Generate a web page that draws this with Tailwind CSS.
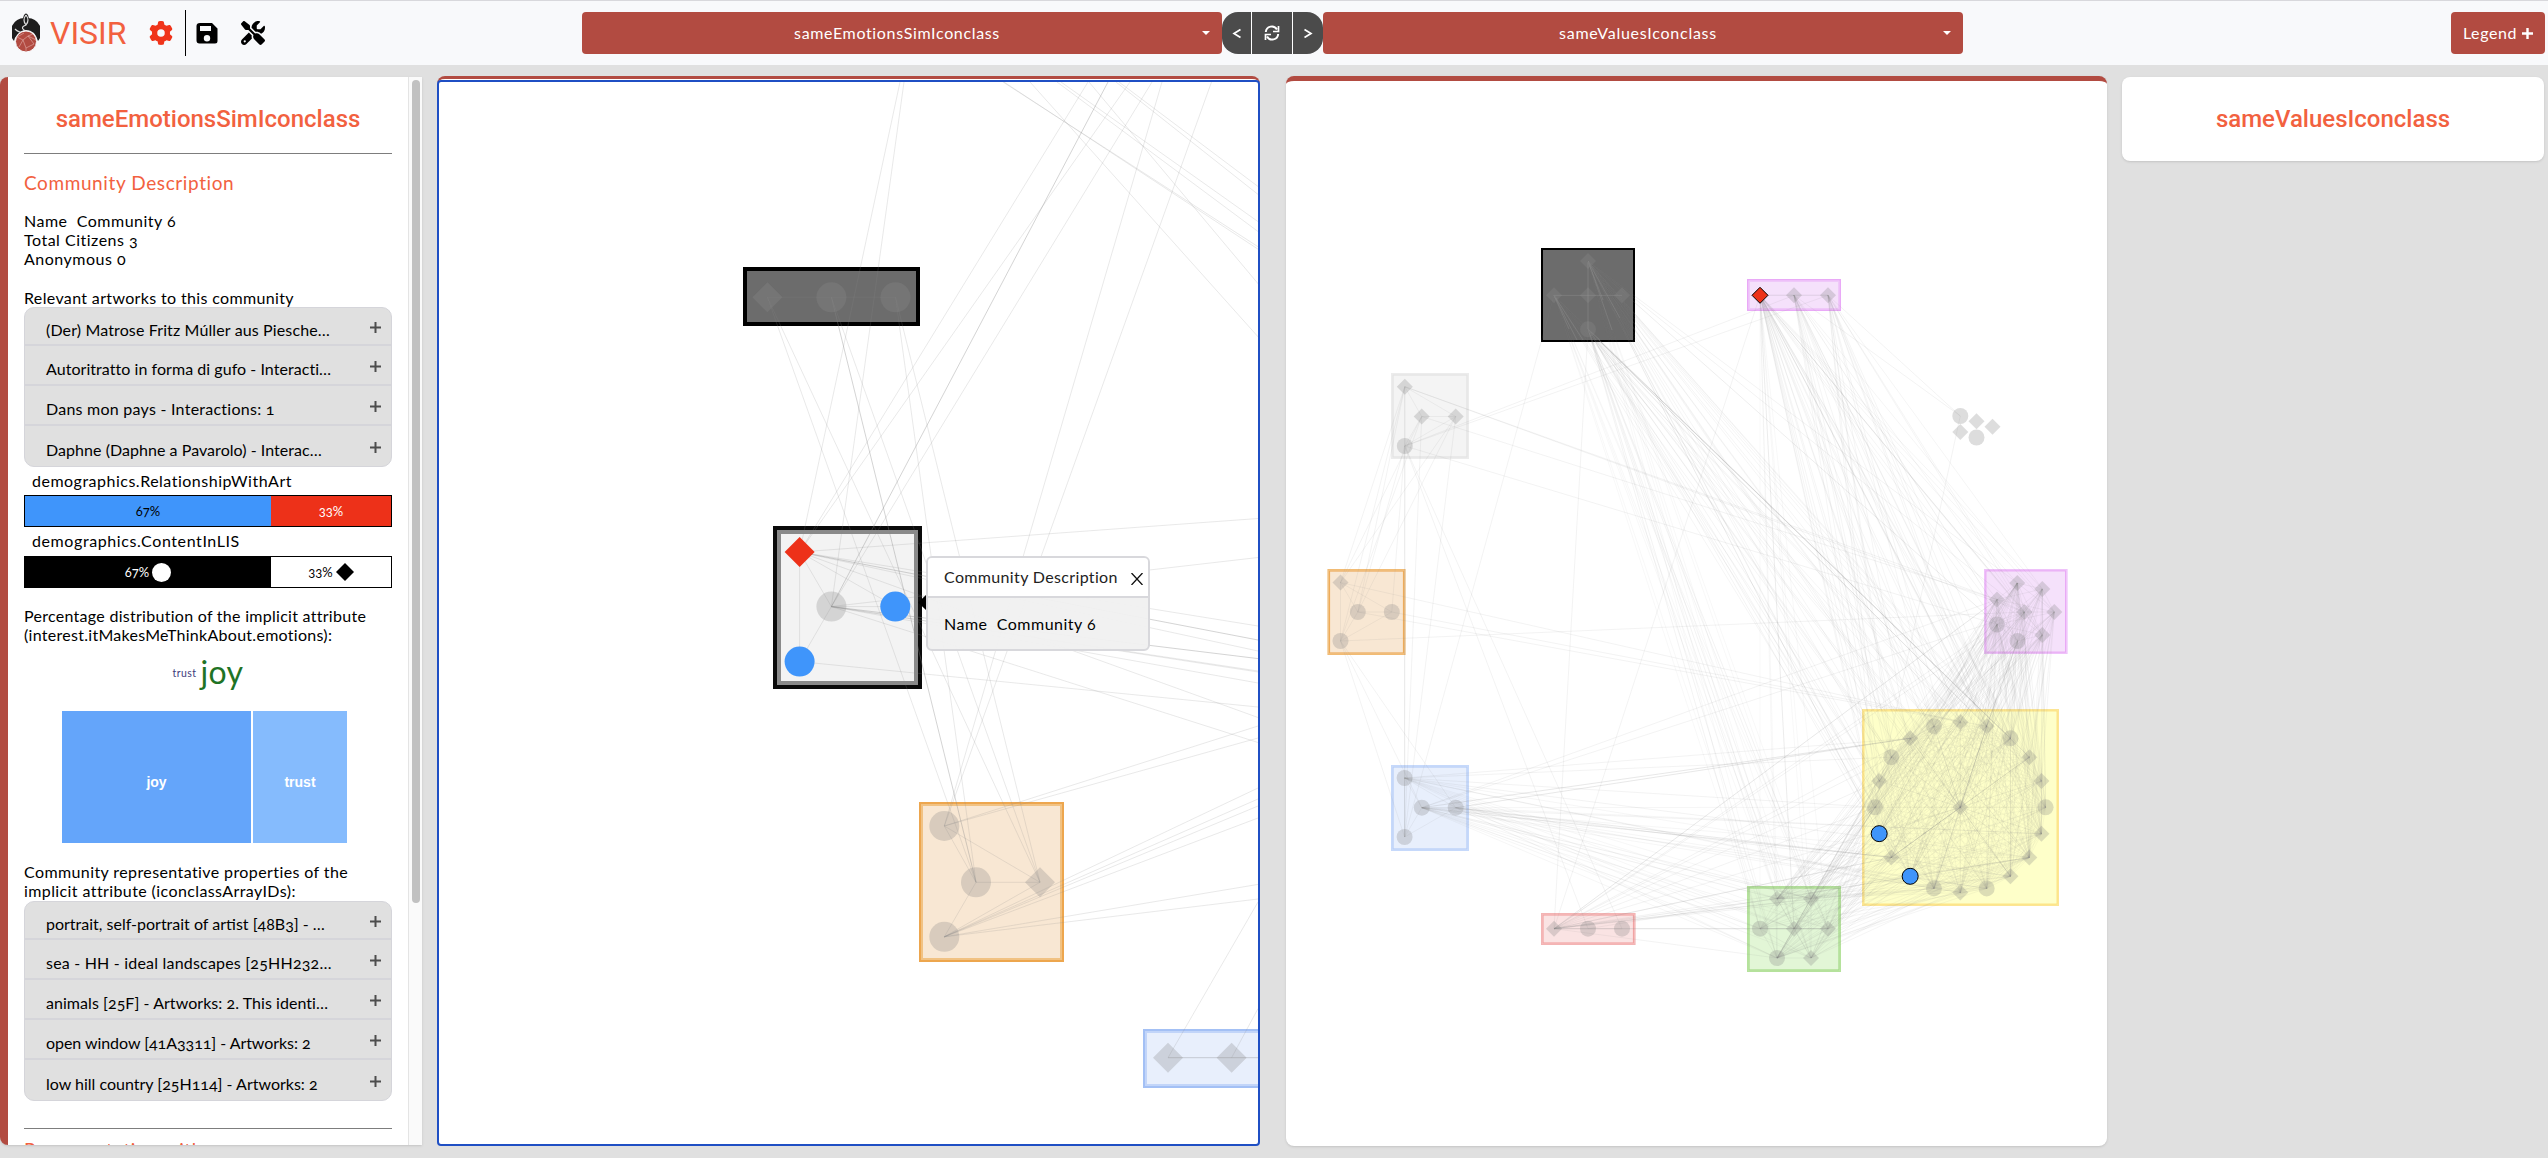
<!DOCTYPE html>
<html lang="en">
<head>
<meta charset="utf-8">
<title>VISIR</title>
<script src="https://cdn.jsdelivr.net/npm/@tailwindcss/browser@4"></script>
</head>
<body class="h-[1158px] w-[2548px] overflow-hidden bg-[#e0e0e0] font-['Lato',sans-serif] text-base text-black [font-feature-settings:'onum']">
<header class="flex h-[65px] items-center border-t border-[#d8d8dc] bg-[#f8f9fb] pl-3">
  <svg class="h-10 w-7" viewBox="0 0 28 40"><path d="M14 5A14 14 0 0 0 2 28Q3 24 5 22Q9 17 14 17Q23 17 26 28A14 14 0 0 0 14 5Z" fill="#1d1d1d"/><ellipse cx="14" cy="7" rx="3" ry="6.500" fill="#1d1d1d"/><path d="M14 2Q10 7 14 12Q18 7 14 2M14 12Q8 14 12 17Q20 20 24 28M3 16Q9 22 17 18" fill="none" stroke="#ddd" stroke-width="1.200"/><circle cx="14" cy="28.500" r="10.500" fill="#b24b41" stroke="#f8f9fb"/><path d="M5 24L11 27L14 35L22 31L16 23L21 21M11 27L7 34M14 35L14 39M5 24L12 20M16 23L24 27M11 27L16 23" fill="none" stroke="#dca29c" stroke-width=".7"/></svg>
  <span class="ml-[10px] w-[77px] whitespace-nowrap font-['Roboto'] text-[32px] leading-none text-[#f2613f]">VISIR</span>
  <svg class="ml-[22px] size-6" viewBox="0 0 512 512" fill="#f0341a"><path d="M495.900 166.600c3.200 8.700 .5 18.400-6.400 24.600l-43.300 39.400c1.100 8.300 1.700 16.800 1.700 25.400s-.6 17.100-1.700 25.400l43.300 39.400c6.900 6.200 9.600 15.900 6.400 24.600c-4.400 11.900-9.700 23.300-15.800 34.300l-4.700 8.100c-6.600 11-14 21.400-22.100 31.200c-5.900 7.200-15.700 9.600-24.500 6.800l-55.700-17.700c-13.400 10.300-28.200 18.900-44 25.400l-12.500 57.100c-2 9.100-9 16.300-18.200 17.800c-13.800 2.300-28 3.500-42.500 3.500s-28.700-1.200-42.500-3.500c-9.200-1.500-16.200-8.700-18.200-17.800l-12.500-57.100c-15.800-6.500-30.600-15.100-44-25.400L83.100 425.900c-8.800 2.800-18.600 .3-24.500-6.800c-8.100-9.800-15.500-20.200-22.100-31.200l-4.700-8.100c-6.100-11-11.400-22.400-15.800-34.300c-3.200-8.700-.5-18.400 6.400-24.600l43.300-39.400C64.600 273.100 64 264.600 64 256s.6-17.100 1.700-25.400L22.400 191.200c-6.900-6.200-9.600-15.900-6.400-24.600c4.400-11.900 9.700-23.300 15.800-34.300l4.700-8.100c6.600-11 14-21.400 22.100-31.200c5.900-7.200 15.700-9.600 24.500-6.800l55.700 17.700c13.400-10.300 28.200-18.900 44-25.400l12.500-57.100c2-9.100 9-16.300 18.200-17.800C227.300 1.200 241.500 0 256 0s28.700 1.200 42.500 3.500c9.200 1.500 16.200 8.700 18.200 17.800l12.500 57.100c15.800 6.500 30.600 15.100 44 25.400l55.700-17.700c8.800-2.800 18.600-.3 24.500 6.800c8.100 9.800 15.500 20.200 22.100 31.200l4.700 8.100c6.100 11 11.400 22.400 15.800 34.300zM256 336a80 80 0 1 0 0-160 80 80 0 1 0 0 160z"/></svg>
  <span class="ml-3 h-[46px] w-px bg-black"></span>
  <svg class="ml-[9px] size-6" viewBox="0 0 24 24"><path fill-rule="evenodd" d="M5 2H17L22.500 7.500V20Q22.500 22.500 20 22.500H4.500Q1.500 22.500 1.500 19.500V5Q1.500 2 5 2ZM5 5V10H16V5ZM12 14A3.200 3.200 0 1 0 12 20.400A3.200 3.200 0 1 0 12 14Z"/></svg>
  <svg class="ml-[22px] size-6" viewBox="0 0 512 512"><path d="M78.600 5C69.100-2.400 55.600-1.500 47 7L7 47c-8.500 8.500-9.400 22-2.100 31.600l80 104c4.500 5.900 11.600 9.400 19 9.400h54.100l109 109c-14.700 29-10 65.400 14.300 89.600l112 112c12.500 12.500 32.800 12.500 45.300 0l64-64c12.500-12.500 12.500-32.800 0-45.300l-112-112c-24.200-24.200-60.600-29-89.600-14.300l-109-109V104c0-7.500-3.500-14.500-9.400-19L78.600 5zM19.900 396.100C7.200 408.800 0 426.100 0 444.100C0 481.600 30.400 512 67.900 512c18 0 35.300-7.200 48-19.900L233.700 374.300c-7.800-20.900-9-43.600-3.600-65.100l-61.700-61.700L19.900 396.100zM512 144c0-10.500-1.100-20.700-3.200-30.500c-2.400-11.200-16.100-14.100-24.200-6l-63.900 63.900c-3 3-7.100 4.700-11.300 4.700H352c-8.800 0-16-7.200-16-16V102.600c0-4.200 1.700-8.300 4.700-11.300l63.900-63.900c8.100-8.100 5.200-21.800-6-24.200C388.700 1.100 378.500 0 368 0C288.500 0 224 64.500 224 144l0 .8 85.300 85.300c36-9.100 75.800 .5 104 28.700L429 274.500c49-23 83-72.800 83-130.500zM56 432a24 24 0 1 1 48 0 24 24 0 1 1 -48 0z"/></svg>

  <div class="ml-[317px] flex h-[42px] text-white">
    <div class="flex w-[640px] items-center rounded bg-[#b24b41] pr-3"><span class="grow pl-[10px] text-center tracking-[.65px]">sameEmotionsSimIconclass</span><svg class="h-1 w-2" viewBox="0 0 8 4"><path d="M0 0H8L4 4Z" fill="#fff"/></svg></div>
    <div class="flex w-[101px] items-center divide-x divide-white overflow-hidden rounded-[16px] bg-[#4b4b4b] text-center">
      <span class="flex h-full w-[30px] items-center justify-center"><svg class="size-3" viewBox="0 0 12 12" fill="none" stroke="#fff" stroke-width="1.700"><path d="M9.500 2.500L3 6.500L9.500 10.500"/></svg></span>
      <span class="flex h-full w-[41px] items-center justify-center"><svg class="size-4" viewBox="0 0 16 16" fill="none" stroke="#fff" stroke-width="2"><path d="M1.800 7A6 6 0 0 1 13 4.500M14.200 9A6 6 0 0 1 3 11.500"/><path d="M14.500 1V6.500H9M1.500 15V9.500H7" stroke-width="1.700"/></svg></span>
      <span class="flex h-full w-[30px] items-center justify-center"><svg class="size-3" viewBox="0 0 12 12" fill="none" stroke="#fff" stroke-width="1.700"><path d="M2.500 2.500L9 6.500L2.500 10.500"/></svg></span>
    </div>
    <div class="flex w-[640px] items-center rounded bg-[#b24b41] pr-3"><span class="grow pl-[10px] text-center tracking-[.75px]">sameValuesIconclass</span><svg class="h-1 w-2" viewBox="0 0 8 4"><path d="M0 0H8L4 4Z" fill="#fff"/></svg></div>
  </div>
  <div class="ml-auto mr-[3px] flex h-[42px] w-[94px] items-center justify-center gap-[5px] rounded bg-[#b24b41] text-white"><span class="tracking-[.6px]">Legend</span><svg class="size-[11px]" viewBox="0 0 11 11" stroke="#fff" stroke-width="2.400"><path d="M5.500 0V11M0 5.500H11"/></svg></div>
</header>

<main class="flex items-start pt-[11px]">
  <aside class="mt-px flex h-[1068px] w-[422px] shrink-0 overflow-hidden rounded-l-lg border-l-8 border-[#b24b41] bg-white shadow">
    <div class="w-[400px] shrink-0 overflow-hidden px-4 leading-[19px] tracking-[.35px]">
      <h1 class="mt-[26px] whitespace-nowrap text-center font-['Roboto'] text-[24px] font-medium leading-8 tracking-normal text-[#f2613f]">sameEmotionsSimIconclass</h1>
      <hr class="mt-[18px] border-[#7d7d7d]">
      <h2 class="mt-[17px] text-[19px] leading-6 tracking-[.6px] text-[#f2613f]">Community Description</h2>
      <p class="mt-[16px] whitespace-pre tracking-[.5px]">Name  Community 6
Total Citizens 3
Anonymous 0</p>
      <p class="mt-[20px]">Relevant artworks to this community</p>
      <div id="art" class="divide-y-2 divide-[#d5d5da] overflow-hidden rounded-[10px] border border-[#d5d5da] bg-[#e0e0e0]"></div>
      <p class="mt-[4px] pl-2 tracking-[.5px]">demographics.RelationshipWithArt</p>
      <div class="mt-[5px] flex h-8 border border-black text-center text-[13px] leading-[31px] tracking-normal"><span class="w-[246px] bg-[#3f95fb]">67%</span><span class="grow bg-[#ed3119] text-white">33%</span></div>
      <p class="mt-[4px] pl-2 tracking-[.6px]">demographics.ContentInLIS</p>
      <div class="mt-[6px] flex h-8 border border-black text-[13px] leading-[30px] tracking-normal"><span class="flex w-[246px] items-center justify-center gap-[3px] bg-black text-white">67%<i class="size-[19px] rounded-full bg-white"></i></span><span class="flex grow items-center justify-center gap-[3px]">33%<svg class="size-[18px]" viewBox="0 0 18 18"><path d="M9 0L18 9L9 18L0 9Z"/></svg></span></div>
      <p class="mt-[18px] whitespace-nowrap tracking-[.28px]">Percentage distribution of the implicit attribute<br>(interest.itMakesMeThinkAbout.emotions):</p>
      <div class="mt-[8px] flex h-[42px] items-center justify-center gap-1"><span class="text-[10.5px] tracking-[.4px] text-[#3d3b7c]">trust</span><span class="-mt-[3px] text-[32px] tracking-[.4px] text-[#1f7325]">joy</span></div>
      <div class="ml-[38px] mt-[17px] flex h-[132px] w-[285px] gap-[2px] text-center font-['Liberation_Sans'] text-sm font-bold leading-[142px] tracking-normal text-white"><span class="w-[189px] bg-[#64a5fa]">joy</span><span class="grow bg-[#85bbfd]">trust</span></div>
      <p class="mt-[19px] whitespace-nowrap tracking-[.4px]">Community representative properties of the<br>implicit attribute (iconclassArrayIDs):</p>
      <div id="icon" class="mt-px divide-y-2 divide-[#d5d5da] overflow-hidden rounded-[10px] border border-[#d5d5da] bg-[#e0e0e0]"></div>
      <hr class="mt-[27px] border-[#7d7d7d]">
      <h2 class="mt-[9px] whitespace-nowrap text-[19px] leading-6 tracking-[.6px] text-[#f2613f]">Representation with</h2>
    </div>
    <div class="w-[14px] border-l border-[#e4e4e4] bg-[#fafafa] pl-[3px] pt-[3px]"><div class="h-[823px] w-2 rounded-full bg-[#c1c1c1]"></div></div>
  </aside>

  <section class="relative ml-[15px] h-[1070px] w-[823px] shrink-0 rounded-lg border-t-[3px] border-[#b24b41] bg-white">
    <div class="mt-px h-[1066px] overflow-hidden rounded border-2 border-[#1f4fc4]"><svg id="net1" class="block h-full w-full" viewBox="439 82 819 1062"></svg></div>
    <div class="absolute left-[481px] top-[516px] h-[15px] w-2 bg-black [clip-path:polygon(100%_0,100%_100%,0_50%)]"></div>
    <div class="absolute left-[489px] top-[477px] h-[95px] w-[224px] overflow-hidden rounded-md border-2 border-[#d8d8dc] bg-[#f0f0f0]/95 tracking-[.35px]">
      <div class="flex h-[40px] items-center border-b-2 border-[#d8d8dc] bg-white/95 pl-4 text-[#222]"><span class="w-[187px] whitespace-nowrap">Community Description</span><svg class="mt-1 size-3" viewBox="0 0 12 12" stroke="#111" stroke-width="1.300"><path d="M.5 0L11.500 12M11.500 0L.5 12"/></svg></div>
      <div class="whitespace-pre pl-4 leading-[52px] tracking-[.5px]">Name  Community 6</div>
    </div>
  </section>

  <section class="ml-[26px] h-[1070px] w-[821px] shrink-0 overflow-hidden rounded-lg border-t-[5px] border-[#b24b41] bg-white shadow"><svg id="net2" class="block h-[1065px] w-[821px]" viewBox="1286 81 821 1065"></svg></section>

  <aside class="ml-[15px] mt-px flex h-[84px] w-[422px] shrink-0 items-center justify-center rounded-lg bg-white font-['Roboto'] text-[24px] font-medium text-[#f2613f] shadow">sameValuesIconclass</aside>
</main>

<script>
// Accordion rows of the side panel
function rows(id, spacing, items) {
  document.getElementById(id).innerHTML = items.map((t, i) =>
    '<div class="flex ' + (i ? 'h-10' : 'h-[38px]') + ' items-center justify-between pl-[21px] pr-[10px] pt-[6px]"><span class="whitespace-nowrap" style="letter-spacing:' + spacing[i] + 'px">' + t +
    '</span><svg class="mb-[3px] size-[11px] shrink-0" viewBox="0 0 11 11" stroke="#4d4d4d" stroke-width="2"><path d="M5.500 0V11M0 5.500H11"/></svg></div>').join('');
}
rows('art', [.13, .05, .25, .05], ['(Der) Matrose Fritz Múller aus Piesche…', 'Autoritratto in forma di gufo - Interacti…', 'Dans mon pays - Interactions: 1', 'Daphne (Daphne a Pavarolo) - Interac…']);
rows('icon', [0, .2, .05, -.05, 0], ['portrait, self-portrait of artist [48B3] - …', 'sea - HH - ideal landscapes [25HH232…', 'animals [25F] - Artworks: 2. This identi…', 'open window [41A3311] - Artworks: 2', 'low hill country [25H114] - Artworks: 2']);

const box = (x, y, r, b, fill, c, w, inner) =>
  `<rect x="${x}" y="${y}" width="${r - x}" height="${b - y}" fill="${fill}"/>` +
  (inner ? `<rect x="${x + w * 1.5}" y="${y + w * 1.5}" width="${r - x - w * 3}" height="${b - y - w * 3}" fill="none" stroke="${inner}" stroke-width="${w}"/>` : '') +
  `<rect x="${x + w / 2}" y="${y + w / 2}" width="${r - x - w}" height="${b - y - w}" fill="none" stroke="${c}" stroke-width="${w}"/>`;
const node = (k, x, y, s, fill = 'rgba(128,128,128,.27)', st = 'none') => k == 'c'
  ? `<circle cx="${x}" cy="${y}" r="${s}" fill="${fill}" stroke="${st}"/>`
  : `<path d="M${x} ${y - s}L${x + s} ${y}L${x} ${y + s}L${x - s} ${y}Z" fill="${fill}" stroke="${st}"/>`;
const line = (a, b, o) => `<path d="M${a[0]} ${a[1]}L${b[0]} ${b[1]}" stroke="rgba(136,136,136,${o})"/>`;

// Left network
{
  const R = [799.6, 552], G = [831.4, 606.6], B = [895.3, 606.6], C = [799.6, 661.6];
  const o1 = [944.3, 826], o2 = [976, 882.3], o3 = [1040, 882.3], o4 = [944.3, 936.8];
  const k1 = [767.4, 297.3], k2 = [831.4, 297.3], k3 = [895.5, 297.3], p1 = [1168, 1057.7], p2 = [1231.6, 1057.7];
  let s = box(743, 267, 920, 326, '#6c6c6c', '#000', 4) + box(773, 526, 922, 689, '#f3f3f3', '#0a0a0a', 4, '#8a8a8a')
    + box(919, 802, 1064, 962, '#f8e7d3', '#eda64e', 2, '#f1c283') + box(1143, 1029, 1300, 1088, '#e8effc', '#a3c0f5', 2, '#c2d5f9');
  s += [['d', k1], ['c', k2], ['c', k3]].map(n => node(n[0], ...n[1], 15, '#757575')).join('') + node('c', ...G, 15)
    + node('c', ...o1, 15) + node('c', ...o2, 15) + node('d', ...o3, 15) + node('c', ...o4, 15) + node('d', ...p1, 15) + node('d', ...p2, 15);
  const E = [[[900, 82], R], [[904, 82], G], [[1088, 82], R], [[1108, 82], G, 2], [[1130, 82], R], [[1152, 82], G], [[1162, 82], o1], [[1211.5, 82], o1],
    [[1003, 82], [1260, 248]], [[1004, 82], [1260, 250.5]], [[1030, 82], [1260, 339]], [[1057, 82], [1260, 233]], [[1061, 82], [1260, 223]], [[1089, 82], [1260, 286]], [[1116, 82], [1260, 196]], [[1119, 82], [1260, 188]],
    [k1, k2], [k2, k3], [k1, o2], [k1, o3], [k2, o2, 2], [k2, o3], [k3, o2], [k3, o3],
    [R, C], [R, G], [G, C], [G, B], [R, B], [R, [1258, 518.5]], [G, [1258, 557.5]], [R, [1258, 626]], [R, [1258, 640], 2], [R, [1258, 651]], [R, [1258, 717.5]],
    [G, [1258, 658.6], 2], [G, [1258, 671]], [G, [1258, 672]], [G, [1258, 683]], [G, [1258, 742.5]], [C, [1258, 707]],
    [o1, [1258, 726]], [o1, [1258, 738]], [o4, [1258, 788]], [o4, [1258, 799]], [o4, [1258, 806]], [o4, [1258, 818]], [o4, [1258, 884.4]], [o4, [1258, 899]],
    [o1, o2], [o1, o3], [o2, o3], [o2, o4], [o3, o4], [p1, [1258, 902]], [p2, [1258, 1008.6]], [p1, [1260, 1057.7], 2]];
  s += E.map(e => line(e[0], e[1], e[2] ? .36 : .19)).join('');
  s += node('d', ...R, 15, '#ed3119') + node('c', ...B, 15, '#3f95fb') + node('c', ...C, 15, '#3f95fb');
  document.getElementById('net1').innerHTML = s;
}

// Right network
{
  const K = [['d', 1588, 261], ['d', 1554, 295.3], ['d', 1588, 295.3], ['d', 1622, 295.3], ['c', 1588, 329.3]];
  const P = [['R', 1760, 295.3], ['d', 1794, 295.3], ['d', 1828, 295.3]];
  const G = [['d', 1404.8, 386.7], ['d', 1421.7, 416.5], ['d', 1455.7, 416.5], ['c', 1404.8, 446]];
  const O = [['d', 1340.5, 582.5], ['c', 1357.8, 612], ['c', 1391.8, 612], ['c', 1340.5, 641]];
  const B = [['c', 1404.6, 778], ['c', 1421.8, 807.7], ['c', 1455.7, 807.7], ['c', 1404.6, 837]];
  const D = [['d', 1554, 928.7], ['c', 1588, 928.7], ['c', 1622, 928.7]];
  const N = [['d', 1777, 898.7], ['d', 1811, 898.7], ['c', 1760, 928.7], ['d', 1794, 928.7], ['d', 1828, 928.7], ['c', 1777, 958], ['d', 1811, 958]];
  const V = [['d', 2017.3, 583], ['d', 2042.3, 589], ['d', 1997, 599.5], ['d', 2024.3, 612], ['d', 2054.3, 612], ['c', 1997, 624.5], ['d', 2042.3, 635], ['c', 2017.5, 641]];
  const I = [['c', 1960.3, 416], ['d', 1976.5, 421.3], ['d', 1992.5, 426.8], ['d', 1960.3, 432], ['c', 1976.5, 437.5]];
  const Y = [...'cddcddcdcdcBdBcdcddd'].map((k, i) => [k, 1960.3 + 85.3 * Math.cos(i * Math.PI / 10), 807.3 - 85.3 * Math.sin(i * Math.PI / 10)]);
  Y.push(['d', 1960.3, 807.3]);
  let s = box(1541, 248, 1635, 342, '#6c6c6c', '#000', 2) + box(1747, 279, 1841, 311, '#f5e1fb', '#e9a9f7', 1.5, '#efc8f9') + box(1391, 373, 1469, 459, '#f4f4f4', '#ececec', 1.3, '#e2e2e2')
    + box(1327.5, 569, 1405.5, 655, '#f8e7d3', '#f1bb74', 1.3, '#edab5a') + box(1391, 765, 1469, 851, '#e8effc', '#c6d9fb', 1.3, '#b4ccf7') + box(1541, 913, 1635.5, 945, '#fae3e3', '#f3b4b4', 1.3, '#f2a3a3')
    + box(1747, 886, 1841, 972, '#e2f6d6', '#b5e29c', 1.3, '#a3da85') + box(1862, 709, 2059, 906, '#feffc9', '#fce594', 1.2, '#fddf78') + box(1984, 569, 2067.5, 654, '#f5e1fb', '#efc2fa', 1.2, '#e8a4f6');
  const hot = [];
  for (const n of [K, P, G, O, B, D, N, V, I, Y].flat()) {
    if (n[0] == 'R') hot.push(node('d', n[1], n[2], 8, '#ed3119', '#000'));
    else if (n[0] == 'B') hot.push(node('c', n[1], n[2], 8, '#3f95fb', '#000'));
    else s += node(n[0], n[1], n[2], 8, K.includes(n) ? '#757575' : undefined);
  }
  const L = (a, b, o = .1) => { s += line(a.slice(1), b.slice(1), o > .1 ? o * .65 : o); };
  // Edges that leave the dark box read lighter than its fill
  const glow = (a, b) => { s += `<path d="M${a[1]} ${a[2]}L${b[0]} ${b[1]}" stroke="rgba(160,160,160,.3)"/>`; };
  const all = (g, o) => g.forEach((a, i) => g.slice(i + 1).forEach(b => L(a, b, o)));
  const pick = (g, h, m, k) => g.forEach((a, i) => h.forEach((b, j) => { if ((i * 7 + j * 5 + i * j) % m < k) L(a, b, .085); }));
  [G, O, B, N, V, P].forEach(g => all(g)); all(Y, .065);
  L(K[1], K[2]); L(K[2], K[3]); L(K[0], K[2]); L(K[2], K[4]); L(D[0], D[1]); L(D[1], D[2]);
  glow(K[1], [1622, 295.3]); glow(K[0], [1588, 329]);
  [[1569, 329], [1577, 340], [1583, 340]].forEach(p => glow(K[1], p));
  [[1603, 300], [1612, 330], [1620, 318]].forEach(p => glow(K[0], p));
  [[1592, 340], [1596, 340], [1600, 340]].forEach(p => glow(K[4], p));
  pick(V, Y, 5, 3); pick(N, Y, 5, 2); pick(V, N, 3, 1); pick(P, Y, 5, 3); pick([K[0], K[1]], Y, 5, 2); Y.forEach((y, i) => { if (i % 4 != 3) L(K[4], y, .09); });
  N.forEach(n => { L(K[4], n); L(K[0], n, .06); L(K[1], n, .06); L(P[0], n, .06); });
  pick(P, V, 5, 2); [0, 3].forEach(i => L(K[0], V[i]));
  L(K[4], Y[3], .32); L(K[4], Y[2], .15); L(K[0], V[5], .22); L(P[0], V[3], .15); L(P[1], V[7], .2); L(P[0], Y[4], .15);
  L(G[0], O[0]); L(G[0], O[3]); L(G[0], O[1]); L(G[1], O[0]); L(G[1], O[3]); L(G[2], O[1]); L(G[2], O[0]); L(G[3], O[2]); L(G[3], O[1]);
  L(G[3], B[3]); L(G[0], B[3]); L(G[1], B[3]); L(G[2], B[3]); L(K[1], B[3]); L(G[3], D[1]); L(G[3], D[2]);
  L(G[3], P[1]); L(G[3], P[2]); L(G[0], V[2]); L(G[1], V[2]); L(G[0], V[3]); L(G[3], V[5]);
  L(K[4], D[0]); L(P[0], D[0]); L(P[0], N[3]); L(P[1], I[0]); L(P[2], I[0]); L(I[0], Y[10]);
  L(O[0], Y[5]); L(O[1], Y[5]); L(O[2], Y[4]); L(O[3], V[3]); L(O[3], B[3]); L(O[3], B[1]); L(O[3], B[2]);
  L(B[1], V[2]); L(B[1], V[3]); L(B[0], Y[7]); L(B[0], Y[8]); L(B[1], Y[7], .3); L(B[2], Y[7], .3); L(B[1], Y[12]); L(B[2], Y[12]);
  [10, 12, 14, 15, 16, 17, 18, 19].forEach((j, i) => { L(B[i % 3], Y[j]); L(B[(i + 1) % 3], Y[j], .08); });
  N.forEach((n, i) => { L(B[1], n, i < 3 ? .2 : .08); L(B[0], n, .07); if (i % 2) L(B[2], n); });
  [6, 8, 9, 10, 12, 14, 17, 18, 20].forEach(j => L(D[0], Y[j])); L(D[0], V[2], .3); L(D[0], V[5]); L(D[0], V[3], .15); L(D[0], Y[12], .2);
  L(D[0], N[4], .4); L(D[0], N[0], .25); L(D[0], N[1], .2); L(D[0], N[5]); L(D[1], Y[18]);
  L(Y[20], Y[4], .4); L(Y[20], Y[2], .25); L(Y[20], Y[12], .4); L(Y[17], Y[3], .2); L(Y[17], Y[20], .2); L(Y[14], Y[20], .2); L(Y[7], Y[20], .15); L(V[7], Y[4], .35);
  L(N[5], Y[10], .25); L(N[6], Y[12], .2); L(N[0], Y[10], .2); L(N[1], Y[10], .25); L(N[0], V[2], .15); L(N[1], V[0], .15); L(N[2], Y[12], .2);
  document.getElementById('net2').innerHTML = s + hot.join('');
}
</script>
</body>
</html>
